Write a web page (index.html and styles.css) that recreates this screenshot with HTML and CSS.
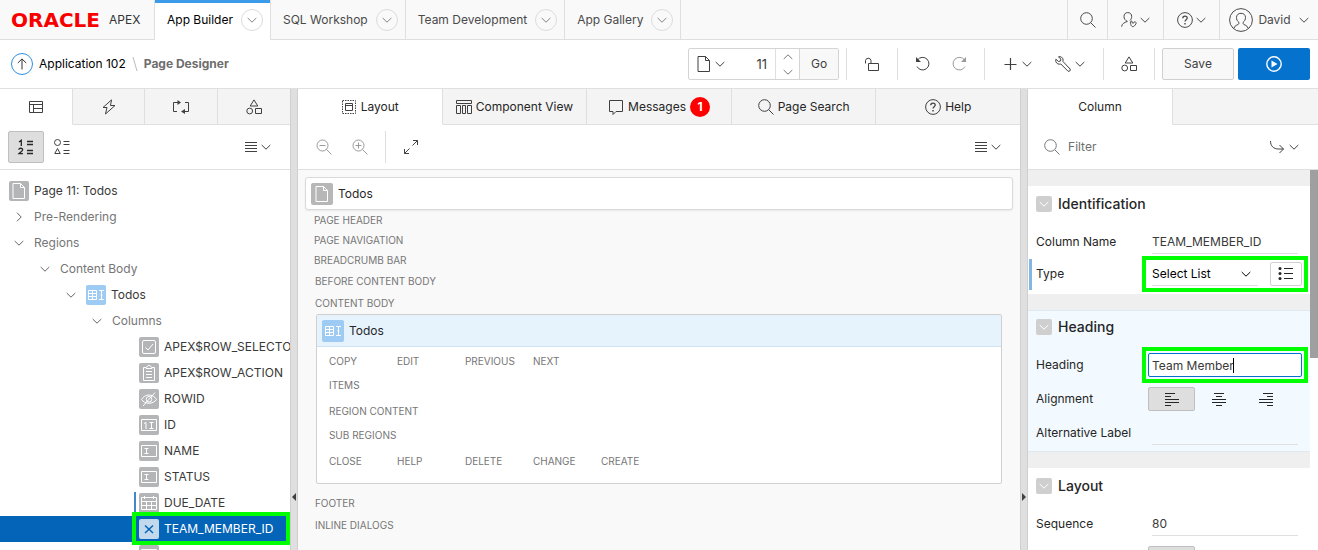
FILE: index.html
```html
<!DOCTYPE html>
<html lang="en">
<head>
<meta charset="utf-8">
<title>Page Designer</title>
<link rel="stylesheet" href="styles.css">
</head>
<body>
<svg class="defs" aria-hidden="true">
  <symbol id="chev" viewBox="0 0 10 10"><path d="M.7 3 5 7.200 9.300 3"/></symbol>
  <symbol id="chev-right" viewBox="0 0 10 10"><path d="M3 .7 7.200 5 3 9.300"/></symbol>
  <symbol id="search" viewBox="0 0 16 16"><circle cx="6.500" cy="6.500" r="5.800"/><path d="m10.700 10.700 4.800 4.800"/></symbol>
  <symbol id="zoom-out" viewBox="0 0 16 16"><circle cx="6.500" cy="6.500" r="5.500"/><path d="m10.500 10.500 5 5M3.500 6.500h6"/></symbol>
  <symbol id="zoom-in" viewBox="0 0 16 16"><circle cx="6.500" cy="6.500" r="5.500"/><path d="m10.500 10.500 5 5M3.500 6.500h6M6.500 3.500v6"/></symbol>
  <symbol id="user-wrench" viewBox="0 0 16 16"><path d="M6.500 9.500C4.300 8.500 3 6.800 3 4.500 3 2 4.500.6 6.800.6s3.900 1.500 3.900 3.900c0 1.800-.8 3-1.700 4M6.200 9.500c-3 1.200-5.200 2-5.600 5.200M9.500 11.200c-.5-1.500.5-2.500 1.500-2v1.500l1.500.5 1-1.500c1.500 0 2 1.300 1.300 2.400-1 1.500-2 2.600-3 2.600s-2-1.300-2.300-3.500z"/></symbol>
  <symbol id="help" viewBox="0 0 16 16"><circle cx="8" cy="8" r="7.400"/><path d="M5.800 6.300c0-1.400.9-2.200 2.200-2.200s2.200.8 2.200 2c0 1.500-2.200 1.700-2.200 3.400" stroke-width="1.300"/><path d="M8 11v1.400" stroke-width="1.400"/></symbol>
  <symbol id="user" viewBox="0 0 24 24"><circle cx="12" cy="12" r="11.400"/><path d="M9.800 14.200C8.300 13 7.500 11.600 7.500 9.500 7.500 6.900 9.300 5.300 12 5.300s4.500 1.600 4.500 4.200c0 2.100-.8 3.500-2.300 4.700v1.500c0 1.300 3.800 1 4.800 4.300M9.800 14.200v1.500c0 1.300-3.800 1-4.800 4.300"/></symbol>
  <symbol id="up" viewBox="0 0 12 12"><path d="M6 11.500V1M1.800 5 6 .9 10.200 5"/></symbol>
  <symbol id="page" viewBox="0 0 14 18"><path d="M1 1.500h7.500l4 4v11H1zM8.500 1.500v4h4"/></symbol>
  <symbol id="lock" viewBox="0 0 16 16"><path d="M4.500 7.500h10v7h-10zM7 7.500v-3a2.800 2.800 0 0 0-5.500 0v3"/></symbol>
  <symbol id="undo" viewBox="0 0 16 16"><path d="M2.500 4A6.300 6.300 0 1 1 2 10.500"/><path d="M1 1v5h5z" fill="currentColor" stroke="none"/></symbol>
  <symbol id="redo" viewBox="0 0 16 16"><path d="M13.500 4a6.300 6.300 0 1 0 .5 6.500"/><path d="M15 1v5h-5z" fill="currentColor" stroke="none"/></symbol>
  <symbol id="plus" viewBox="0 0 14 14"><path d="M6.500 1v12M.5 7.500h12" stroke-width="1.200"/></symbol>
  <symbol id="wrench" viewBox="0 0 16 16"><path d="M3.500.8c2-.6 4.500.5 4.600 3.200 0 .6-.2 1.200-.1 1.500l7.100 7.500c1 1.200-1 3.200-2.200 2.100L5.800 8c-2 .6-4.300-.2-5-2.500-.2-.7-.2-1.500.1-2.300L3.500 5.500l2-.5.300-1.900z"/></symbol>
  <symbol id="shapes" viewBox="0 0 16 16"><path d="M8 .9 11.800 7H4.200zM9.500 9.500h6v5h-6z"/><circle cx="3.700" cy="12" r="2.900"/></symbol>
  <symbol id="play" viewBox="0 0 16 16"><circle cx="8" cy="8" r="7.200" stroke-width="1.400"/><path d="M5.500 4.500v7L11.500 8z" fill="currentColor" stroke="none"/></symbol>
  <symbol id="layout-tree" viewBox="0 0 16 14"><path d="M1.500 1.500h13v11h-13zM1.500 4.500h13M5.500 4.500v8M5.500 8.500h9"/></symbol>
  <symbol id="bolt" viewBox="0 0 16 16"><path d="M10.500.9 2 8.500h4L4.500 15 14 6.500H9.500z"/></symbol>
  <symbol id="cycle" viewBox="0 0 18 16"><path d="M5 12.500H1.500v-9H7M13 3.500h3.500v9H12"/><path d="M5.500 1v5l3.500-2.500zM13 10v5l-4-2.500z" fill="currentColor" stroke="none"/></symbol>
  <symbol id="ordered" viewBox="0 0 18 18"><path d="M2 4 4.300 2.300V8M1.800 11.800c.2-2.200 4.200-2 3.800.2-.2 1.300-2.300 2-3.700 3.700h4M10 3.500h6M10 6.500h6M10 12.500h6M10 15.500h6" stroke-width="1.300"/></symbol>
  <symbol id="grouped" viewBox="0 0 18 18"><circle cx="4.500" cy="4.500" r="3"/><path d="M4.500 10.500 7.200 15.500H1.800zM10.500 3.500h6M10.500 6.500h6M10.500 12.500h6M10.500 15.500h6"/></symbol>
  <symbol id="lines" viewBox="0 0 12 12"><path d="M0 1.500h12M0 4.500h12M0 7.500h12M0 10.500h12"/></symbol>
  <symbol id="layout" viewBox="0 0 16 16"><path d="M1.500 1.500h13v13h-13z" stroke-dasharray="1.500 1"/><path d="M4.500 4.500h7v7h-7zM4.500 6.500h7"/></symbol>
  <symbol id="component" viewBox="0 0 16 16"><path d="M.5 1.500h15v3H.5zM.5 6.500h4v8h-4zM6.500 6.500h3v8h-3zM11.500 6.500h4v8h-4z"/></symbol>
  <symbol id="message" viewBox="0 0 16 16"><path d="M1.500 1.500h13v11H8l-3 3v-3H1.500z"/></symbol>
  <symbol id="expand" viewBox="0 0 16 16"><path d="m9.500 6.500 5-5M10 1.500h4.500V6M6.500 9.500l-5 5M1.500 10v4.500H6"/></symbol>
  <symbol id="goto" viewBox="0 0 16 16"><path d="M1.500 2c0 5 3 8 8 8h5M10.500 6l4 4-4 4"/></symbol>
  <symbol id="grid" viewBox="0 0 20 20"><path d="M2.500 5.500h8v9h-8zM6.500 5.500v9M2.500 8.500h8M2.500 11.500h8M13 5.500h5M13 14.500h5M15.500 5.500v9M14.500 10h2"/></symbol>
  <symbol id="check" viewBox="0 0 20 20"><rect x="3.500" y="3.500" width="13" height="13" rx="1.500"/><path d="m6.500 10.500 2.500 2.500 5-6"/></symbol>
  <symbol id="clipboard" viewBox="0 0 20 20"><path d="M7 4.500H4.500v13h11v-13H13L10 2 7 4.500v1h6v-1M7 8.500h6M7 11.500h6M7 14.500h6"/></symbol>
  <symbol id="hidden" viewBox="0 0 20 20"><path d="M2.500 10.500C6 4.500 14 4.500 17.500 10.500 14 15.500 6 15.500 2.500 10.500zM16 3.500 4 17"/><circle cx="10" cy="10.300" r="2.800"/></symbol>
  <symbol id="number" viewBox="0 0 20 20"><path d="M2.500 4.500h15v11h-15zM5 8.500l2-1V14M10.500 7.500h4M10.500 13.500h4M12.500 7.500v6"/></symbol>
  <symbol id="textfield" viewBox="0 0 20 20"><path d="M2.500 4.500h15v11h-15zM5.500 7.500h4M5.500 12.500h4M7.500 7.500v5"/></symbol>
  <symbol id="calendar" viewBox="0 0 20 20"><path d="M2.500 4.500h15v12h-15zM2.500 8.500h15M2.500 12.500h15M7.500 8.500v8M12.500 8.500v8M5.500 3v3M14.500 3v3"/></symbol>
  <symbol id="cross" viewBox="0 0 20 20"><path d="m6 6.500 8 7.500M14 6.500 6 14" stroke-width="1.500"/></symbol>
  <symbol id="list" viewBox="0 0 16 14"><path d="M6 1.500h9M6 6.500h9M6 11.500h9"/><g fill="currentColor" stroke="none"><circle cx="2" cy="1.500" r="1.500"/><circle cx="2" cy="6.500" r="1.500"/><circle cx="2" cy="11.500" r="1.500"/></g></symbol>
  <symbol id="al-left" viewBox="0 0 14 14"><path d="M0 1.500h10M0 4.500h6M0 7.500h14M0 10.500h14M0 13.500h6"/></symbol>
  <symbol id="al-center" viewBox="0 0 14 14"><path d="M2 1.500h10M4 4.500h6M0 7.500h14M0 10.500h14M4 13.500h6"/></symbol>
  <symbol id="al-right" viewBox="0 0 14 14"><path d="M4 1.500h10M8 4.500h6M0 7.500h14M0 10.500h14M8 13.500h6"/></symbol>
</svg>

<header class="topbar">
  <a class="brand" href="#"><span class="brand-name">ORACLE</span><span class="brand-product">APEX</span></a>
  <nav class="main-nav">
    <a class="nav-item active" href="#">App Builder<span class="round"><svg class="i10"><use href="#chev"/></svg></span></a>
    <a class="nav-item" href="#">SQL Workshop<span class="round"><svg class="i10"><use href="#chev"/></svg></span></a>
    <a class="nav-item" href="#">Team Development<span class="round"><svg class="i10"><use href="#chev"/></svg></span></a>
    <a class="nav-item" href="#">App Gallery<span class="round"><svg class="i10"><use href="#chev"/></svg></span></a>
  </nav>
  <div class="top-tools">
    <button class="top-btn narrow" aria-label="Search"><svg class="i16"><use href="#search"/></svg></button>
    <button class="top-btn" aria-label="Administration"><svg class="i16"><use href="#user-wrench"/></svg><svg class="i10"><use href="#chev"/></svg></button>
    <button class="top-btn" aria-label="Help"><svg class="i16"><use href="#help"/></svg><svg class="i10"><use href="#chev"/></svg></button>
    <button class="top-btn account"><svg class="i24"><use href="#user"/></svg><span>David</span><svg class="i10"><use href="#chev"/></svg></button>
  </div>
</header>

<div class="actionbar">
  <nav class="crumbs">
    <a class="up" href="#" aria-label="Up"><svg class="i12"><use href="#up"/></svg></a>
    <a href="#">Application 102</a>
    <svg class="slash" viewBox="0 0 6 16"><path d="m1 1 4 14"/></svg>
    <strong>Page Designer</strong>
  </nav>
  <div class="actions">
    <div class="page-picker">
      <button class="pick" aria-label="Page list"><svg class="page-icon"><use href="#page"/></svg><svg class="i10"><use href="#chev"/></svg></button>
      <input class="page-no" type="text" value="11" aria-label="Page number">
      <div class="spin">
        <button aria-label="Next page"><svg class="i10 flip"><use href="#chev"/></svg></button>
        <button aria-label="Previous page"><svg class="i10"><use href="#chev"/></svg></button>
      </div>
      <button class="go">Go</button>
    </div>
    <i class="sep"></i>
    <button class="tool" aria-label="Unlocked"><svg class="i16"><use href="#lock"/></svg></button>
    <i class="sep"></i>
    <button class="tool" aria-label="Undo"><svg class="i16"><use href="#undo"/></svg></button>
    <button class="tool off" aria-label="Redo"><svg class="i16"><use href="#redo"/></svg></button>
    <i class="sep"></i>
    <button class="tool wide" aria-label="Create"><svg class="i14"><use href="#plus"/></svg><svg class="i10"><use href="#chev"/></svg></button>
    <button class="tool wide" aria-label="Utilities"><svg class="i16"><use href="#wrench"/></svg><svg class="i10"><use href="#chev"/></svg></button>
    <i class="sep"></i>
    <button class="tool" aria-label="Shared Components"><svg class="i16"><use href="#shapes"/></svg></button>
    <i class="sep"></i>
    <button class="save">Save</button>
    <button class="run" aria-label="Save and run"><svg class="i16"><use href="#play"/></svg></button>
  </div>
</div>

<main class="designer">
  <section class="pane side">
    <div class="tabs">
      <button class="tab active" aria-label="Rendering"><svg class="i16"><use href="#layout-tree"/></svg></button>
      <button class="tab" aria-label="Dynamic Actions"><svg class="i16"><use href="#bolt"/></svg></button>
      <button class="tab" aria-label="Processing"><svg class="i18"><use href="#cycle"/></svg></button>
      <button class="tab" aria-label="Shared Components"><svg class="i16"><use href="#shapes"/></svg></button>
    </div>
    <div class="pane-tools tree-tools">
      <button class="tool pressed" aria-label="Processing order"><svg class="i18"><use href="#ordered"/></svg></button>
      <button class="tool" aria-label="Component type"><svg class="i18"><use href="#grouped"/></svg></button>
      <button class="menu" aria-label="Menu"><svg class="i12"><use href="#lines"/></svg><svg class="i10"><use href="#chev"/></svg></button>
    </div>
    <ul class="tree">
      <li class="node l0"><svg class="node-icon"><use href="#page" x="3" y="1" width="14" height="18"/></svg>Page 11: Todos</li>
      <li class="node l0 group"><span class="toggle"><svg class="i10"><use href="#chev-right"/></svg></span>Pre-Rendering</li>
      <li class="node l0 group"><span class="toggle"><svg class="i10"><use href="#chev"/></svg></span>Regions</li>
      <li class="node l1 group"><span class="toggle"><svg class="i10"><use href="#chev"/></svg></span>Content Body</li>
      <li class="node l2"><span class="toggle"><svg class="i10"><use href="#chev"/></svg></span><svg class="node-icon region"><use href="#grid"/></svg>Todos</li>
      <li class="node l3 group"><span class="toggle"><svg class="i10"><use href="#chev"/></svg></span>Columns</li>
      <li class="node l5"><svg class="node-icon"><use href="#check"/></svg>APEX$ROW_SELECTO</li>
      <li class="node l5"><svg class="node-icon"><use href="#clipboard"/></svg>APEX$ROW_ACTION</li>
      <li class="node l5"><svg class="node-icon"><use href="#hidden"/></svg>ROWID</li>
      <li class="node l5"><svg class="node-icon"><use href="#number"/></svg>ID</li>
      <li class="node l5"><svg class="node-icon"><use href="#textfield"/></svg>NAME</li>
      <li class="node l5"><svg class="node-icon"><use href="#textfield"/></svg>STATUS</li>
      <li class="node l5 changed"><svg class="node-icon"><use href="#calendar"/></svg>DUE_DATE</li>
      <li class="node l5 selected"><svg class="node-icon"><use href="#cross"/></svg>TEAM_MEMBER_ID<span class="marker"></span></li>
      <li class="node l5"><svg class="node-icon"><use href="#textfield"/></svg></li>
    </ul>
  </section>

  <div class="splitter"><svg class="grip" viewBox="0 0 4 8"><path d="M4 0v8L0 4z"/></svg></div>

  <section class="pane center">
    <div class="tabs">
      <button class="tab active"><svg class="i16"><use href="#layout"/></svg>Layout</button>
      <button class="tab"><svg class="i16"><use href="#component"/></svg>Component View</button>
      <button class="tab"><svg class="i16"><use href="#message"/></svg>Messages<span class="badge">1</span></button>
      <button class="tab"><svg class="i16"><use href="#search"/></svg>Page Search</button>
      <button class="tab"><svg class="i16"><use href="#help"/></svg>Help</button>
    </div>
    <div class="pane-tools">
      <button class="tool off" aria-label="Zoom out"><svg class="i16"><use href="#zoom-out"/></svg></button>
      <button class="tool off" aria-label="Zoom in"><svg class="i16"><use href="#zoom-in"/></svg></button>
      <i class="sep"></i>
      <button class="tool" aria-label="Expand"><svg class="i16"><use href="#expand"/></svg></button>
      <button class="menu" aria-label="Menu"><svg class="i12"><use href="#lines"/></svg><svg class="i10"><use href="#chev"/></svg></button>
    </div>
    <div class="canvas">
      <div class="page-card"><svg class="card-icon"><use href="#page" x="4" y="2" width="14" height="18"/></svg>Todos</div>
      <div class="slot">PAGE HEADER</div>
      <div class="slot">PAGE NAVIGATION</div>
      <div class="slot">BREADCRUMB BAR</div>
      <div class="slot body">BEFORE CONTENT BODY</div>
      <div class="slot body">CONTENT BODY</div>
      <div class="region-card">
        <div class="region-head"><svg class="card-icon region"><use href="#grid" x="1" y="1" width="20" height="20"/></svg>Todos</div>
        <div class="region-slots">
          <div class="slot-row"><span>COPY</span><span>EDIT</span><span>PREVIOUS</span><span>NEXT</span></div>
          <div class="slot-row">ITEMS</div>
          <div class="slot-row spaced">REGION CONTENT</div>
          <div class="slot-row">SUB REGIONS</div>
          <div class="slot-row spaced"><span>CLOSE</span><span>HELP</span><span>DELETE</span><span>CHANGE</span><span>CREATE</span></div>
        </div>
      </div>
      <div class="slot body">FOOTER</div>
      <div class="slot body">INLINE DIALOGS</div>
    </div>
  </section>

  <div class="splitter"><svg class="grip" viewBox="0 0 4 8"><path d="M0 0v8l4-4z"/></svg></div>

  <section class="pane side">
    <div class="tabs single">
      <button class="tab active">Column</button>
    </div>
    <div class="pane-tools filter-tools">
      <svg class="i16"><use href="#search"/></svg>
      <input class="filter" type="text" placeholder="Filter" aria-label="Filter">
      <button class="menu" aria-label="Go to group"><svg class="i16"><use href="#goto"/></svg><svg class="i10"><use href="#chev"/></svg></button>
    </div>
    <div class="props">
      <div class="prop-list">
        <section class="group-box compact">
          <h2><button aria-label="Collapse"><svg class="i10"><use href="#chev"/></svg></button>Identification</h2>
          <div class="prop"><label for="col-name">Column Name</label><div class="value"><input id="col-name" type="text" value="TEAM_MEMBER_ID"></div></div>
          <div class="prop edited"><label for="col-type">Type</label>
            <div class="value">
              <div class="select-wrap"><select id="col-type"><option>Select List</option></select><svg class="i10"><use href="#chev"/></svg></div>
              <button class="pick-list" aria-label="Choose type"><svg class="i16"><use href="#list"/></svg></button>
              <span class="marker"></span>
            </div>
          </div>
        </section>
        <section class="group-box current">
          <h2><button aria-label="Collapse"><svg class="i10"><use href="#chev"/></svg></button>Heading</h2>
          <div class="prop"><label for="heading">Heading</label><div class="value"><input id="heading" class="focused" type="text" value="Team Member"><span class="caret"></span><span class="marker"></span></div></div>
          <div class="prop"><span>Alignment</span>
            <div class="value align">
              <button class="pressed" aria-label="Start"><svg class="i14"><use href="#al-left"/></svg></button>
              <button aria-label="Center"><svg class="i14"><use href="#al-center"/></svg></button>
              <button aria-label="End"><svg class="i14"><use href="#al-right"/></svg></button>
            </div>
          </div>
          <div class="prop"><label for="alt-label">Alternative Label</label><div class="value"><input id="alt-label" type="text"></div></div>
        </section>
        <section class="group-box">
          <h2><button aria-label="Collapse"><svg class="i10"><use href="#chev"/></svg></button>Layout</h2>
          <div class="prop"><label for="seq">Sequence</label><div class="value"><input id="seq" type="text" value="80"></div></div>
          <div class="prop"><span></span><div class="value align"><button class="pressed" aria-label="Option"></button></div></div>
        </section>
      </div>
      <div class="scroll-track"><div class="scroll-thumb"></div></div>
    </div>
  </section>
</main>
</body>
</html>
```

FILE: styles.css
```css
* { box-sizing: border-box; }
body {
  margin: 0;
  height: 100vh;
  display: flex;
  flex-direction: column;
  overflow: hidden;
  background: #fff;
  color: #262626;
  font: 12px/16px Inter, "Liberation Sans", sans-serif;
}
button, input, select { font: inherit; color: inherit; margin: 0; padding: 0; border: 0; background: none; outline: 0; border-radius: 0; }
button { display: flex; align-items: center; justify-content: center; }
a { color: inherit; text-decoration: none; }
svg { flex: none; fill: none; stroke: currentColor; stroke-width: 1; }
.defs { position: absolute; width: 0; height: 0; }
.i10 { width: 10px; height: 10px; }
.i12 { width: 12px; height: 12px; }
.i14 { width: 14px; height: 14px; }
.i16 { width: 16px; height: 16px; }
.i18 { width: 18px; height: 18px; }
.i24 { width: 24px; height: 24px; }

/* Top bar */
.topbar { flex: none; display: flex; height: 40px; background: #f9f9f9; color: #4a4a4a; }
.brand { display: flex; align-items: center; gap: 9px; width: 155px; padding-left: 11px; border-right: 1px solid #dfdfdf; border-bottom: 1px solid #dfdfdf; }
.brand-name { color: #f80000; font: bold 20px/20px "DejaVu Sans", sans-serif; }
.brand-product { color: #333; }
.main-nav { display: flex; flex: 1; border-bottom: 1px solid #dfdfdf; }
.nav-item { display: flex; align-items: center; gap: 8px; padding: 0 7px 0 12px; border-right: 1px solid #dfdfdf; }
.nav-item.active { height: 40px; background: #fff; color: #000; box-shadow: inset 0 3px #3c9be8; }
.round { display: flex; align-items: center; justify-content: center; width: 22px; height: 22px; border: 1px solid #dcdcdc; border-radius: 50%; color: #858585; }
.top-tools { display: flex; border-bottom: 1px solid #dfdfdf; }
.top-btn { width: 56px; gap: 3px; border-left: 1px solid #dfdfdf; }
.top-btn.narrow { width: 40px; }
.top-btn.account { width: 99px; gap: 5px; }
.account .i10 { margin-left: 3px; }

/* Action bar */
.actionbar { flex: none; display: flex; justify-content: space-between; align-items: center; height: 49px; padding: 0 8px 0 11px; border-bottom: 1px solid #dfdfdf; }
.crumbs { display: flex; align-items: center; gap: 6px; color: #000; }
.crumbs strong { color: #6e6e6e; font-weight: 700; }
.up { display: flex; align-items: center; justify-content: center; width: 22px; height: 22px; border: 1px solid #2d8fe2; border-radius: 50%; color: #333; }
.slash { width: 6px; height: 16px; color: #bbb; }
.actions { display: flex; align-items: center; }
.page-picker { display: flex; height: 32px; border: 1px solid #d4d4d4; border-radius: 2px; color: #404040; }
.pick { width: 44px; gap: 4px; }
.page-icon { width: 14px; height: 18px; }
.page-no { width: 42px; padding-right: 8px; text-align: right; font-size: 13px; }
.spin { display: flex; flex-direction: column; width: 24px; border-left: 1px solid #dfdfdf; color: #777; }
.spin button { flex: 1; }
.flip { transform: rotate(180deg); }
.go { width: 39px; border-left: 1px solid #d4d4d4; background: #f8f8f8; }
.sep { width: 1px; height: 32px; margin: 0 7px; background: #dfdfdf; }
.tool { width: 36px; height: 32px; gap: 4px; color: #404040; }
.tool.wide { width: 52px; }
.tool.off { color: #9a9a9a; }
.pressed { background: #dedede; border: 1px solid #bfbfbf; border-radius: 2px; color: #262626; }
.save, .run { width: 72px; height: 32px; border-radius: 2px; }
.save { border: 1px solid #d0d0d0; background: #f8f8f8; color: #404040; }
.run { margin-left: 4px; background: #0572ce; color: #fff; }

/* Designer panes */
.designer { flex: 1; display: flex; min-height: 0; }
.pane { display: flex; flex-direction: column; min-width: 0; overflow: hidden; }
.side { flex: none; width: 22%; }
.center { flex: 1; }
.splitter { flex: none; display: flex; align-items: center; justify-content: center; width: 8px; padding-top: 355px; border: solid #cfcfcf; border-width: 0 1px; background: #dfdfdf; }
.grip { width: 4px; height: 8px; fill: #404040; stroke: none; }
.tabs { flex: none; display: flex; height: 36px; }
.tab { flex: 1; gap: 4px; background: #f4f4f4; border-bottom: 1px solid #dfdfdf; border-right: 1px solid #dfdfdf; }
.tab:last-child { border-right: 0; }
.tab svg { color: #404040; }
.tab.active { background: #fff; border-bottom-color: #fff; }
.tabs.single { background: #f4f4f4; box-shadow: inset 0 -1px #dfdfdf; }
.tabs.single .tab { flex: none; width: 145px; border-right: 1px solid #dfdfdf; }
.badge { width: 20px; height: 20px; border-radius: 50%; background: #f00; color: #fff; font-weight: 700; line-height: 20px; }
.pane-tools { flex: none; display: flex; align-items: center; height: 45px; padding: 0 19px 0 8px; border-bottom: 1px solid #dfdfdf; }
.pane-tools .menu { margin-left: auto; gap: 4px; color: #404040; }

/* Component tree */
.tree { flex: 1; min-height: 0; margin: 0; padding: 8px 0 0; list-style: none; overflow: hidden; }
.node { position: relative; display: flex; align-items: center; gap: 5px; height: 26px; white-space: nowrap; color: #393939; }
.node.group { color: #767676; }
.l0 { padding-left: 9px; }
.l1 { padding-left: 35px; }
.l2 { padding-left: 61px; }
.l3 { padding-left: 87px; }
.l5 { padding-left: 139px; }
.toggle { display: flex; align-items: center; justify-content: center; width: 20px; color: #666; }
.node-icon { width: 20px; height: 20px; border-radius: 2px; background: #b3b5b7; color: #fff; }
.node-icon.region, .card-icon.region { background: #9dcbf3; }
.changed::before { content: ""; position: absolute; left: 134px; top: 2px; width: 2px; height: 22px; background: #4389c8; }
.selected { background: #0364b8; color: #fff; z-index: 1; }
.selected .node-icon { background: #c2d9ed; color: #0364b8; }
.marker { position: absolute; inset: -6px; border: 4px solid #0f0; pointer-events: none; }
.selected .marker { inset: -4px 0 -3px 132px; }

/* Layout canvas */
.canvas { flex: 1; padding: 7px 7px 0; background: #f9f9f9; overflow: hidden; }
.page-card { display: flex; align-items: center; gap: 5px; height: 33px; padding-left: 5px; border: 1px solid #dadada; border-radius: 3px; background: #fff; box-shadow: 0 1px 2px #0001; }
.card-icon { width: 22px; height: 22px; border-radius: 2px; background: #b7b7b7; color: #fff; }
.slot, .slot-row { color: #767676; font-size: 10px; }
.slot { padding-left: 9px; line-height: 20px; }
.slot.body { padding-left: 10px; line-height: 22px; }
.region-card { margin: 0 11px 8px; border: 1px solid #d0d0d0; border-radius: 2px; background: #fff; }
.region-head { display: flex; align-items: center; gap: 5px; height: 32px; padding-left: 5px; border-bottom: 1px solid #cfe2f2; background: #e6f3fd; }
.region-slots { padding: 2px 12px 10px; }
.slot-row { display: grid; grid-template-columns: repeat(auto-fill, 68px); line-height: 24px; white-space: nowrap; }
.slot-row.spaced { margin-top: 2px; }

/* Property editor */
.filter-tools { padding-left: 16px; gap: 8px; color: #777; }
.filter { flex: 1; min-width: 0; }
.filter::placeholder { color: #6e6e6e; opacity: 1; }
.props { flex: 1; min-height: 0; display: flex; }
.prop-list { flex: 1; min-width: 0; padding-top: 16px; overflow: hidden; background: #efefef; }
.scroll-track { width: 8px; background: #fff; }
.scroll-thumb { height: 188px; background: #9f9f9f; }
.group-box { margin-bottom: 16px; padding: 0 8px 1px; background: #fff; }
.group-box.current { background: #f2f9ff; border: solid #dfe9f2; border-width: 1px 0; }
.group-box h2 { display: flex; align-items: center; gap: 6px; height: 36px; margin: 0 0 3px; font-size: 14px; font-weight: 500; }
.group-box.current h2 { height: 32px; margin-bottom: 5px; }
.group-box h2 button { width: 16px; height: 16px; border-radius: 2px; background: #cfcfcf; color: #fff; }
.prop { position: relative; display: grid; grid-template-columns: 112px minmax(0, 1fr); align-items: center; height: 34px; }
.compact { padding-bottom: 4px; }
.group-box.compact h2 { margin-bottom: 4px; }
.compact .prop { height: 32px; }
.edited::before { content: ""; position: absolute; left: -7px; top: 1px; width: 3px; height: 31px; background: #84b6e4; }
.value { position: relative; display: flex; height: 24px; }
.value input { flex: 1; min-width: 0; height: 24px; margin: 0 4px; border-bottom: 1px solid #dfdfdf; color: #393939; }
.value input.focused { margin: 0; padding: 0 3px; border: 1px solid #0572ce; border-radius: 2px; background: #fff; }
.caret { position: absolute; left: 85px; top: 5px; width: 1px; height: 15px; background: #000; }
.select-wrap { position: relative; flex: 1; margin: 0 12px 0 4px; border-bottom: 1px solid #dfdfdf; color: #000; }
.select-wrap select { width: 100%; height: 23px; appearance: none; }
.select-wrap svg { position: absolute; right: 7px; top: 7px; pointer-events: none; }
.pick-list { width: 32px; border: 1px solid #d0d0d0; border-radius: 2px; background: #fff; }
.align button { flex: none; width: 47px; height: 24px; }
```
